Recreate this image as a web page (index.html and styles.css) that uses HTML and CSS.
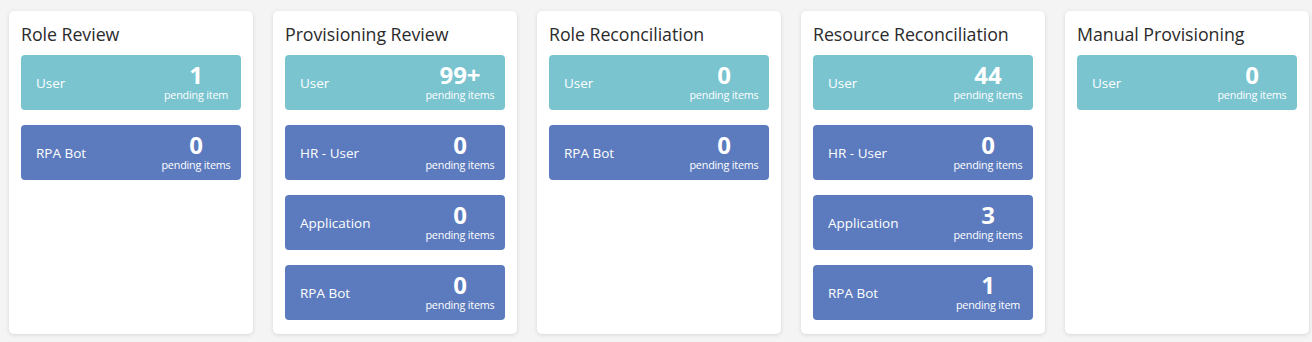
FILE: index.html
```html
<!DOCTYPE html>
<html lang="en">
<head>
<meta charset="utf-8">
<title>Pending Reviews</title>
<link rel="stylesheet" href="styles.css">
</head>
<body>
<div class="board">
  <section class="card">
    <h2 class="card-title">Role Review</h2>
    <div class="tile tile-user"><span class="tile-label">User</span><span class="tile-count"><span class="num">1</span><span class="sub">pending item</span></span></div>
    <div class="tile tile-other"><span class="tile-label">RPA Bot</span><span class="tile-count"><span class="num">0</span><span class="sub">pending items</span></span></div>
  </section>
  <section class="card">
    <h2 class="card-title">Provisioning Review</h2>
    <div class="tile tile-user"><span class="tile-label">User</span><span class="tile-count"><span class="num">99+</span><span class="sub">pending items</span></span></div>
    <div class="tile tile-other"><span class="tile-label">HR - User</span><span class="tile-count"><span class="num">0</span><span class="sub">pending items</span></span></div>
    <div class="tile tile-other"><span class="tile-label">Application</span><span class="tile-count"><span class="num">0</span><span class="sub">pending items</span></span></div>
    <div class="tile tile-other"><span class="tile-label">RPA Bot</span><span class="tile-count"><span class="num">0</span><span class="sub">pending items</span></span></div>
  </section>
  <section class="card">
    <h2 class="card-title">Role Reconciliation</h2>
    <div class="tile tile-user"><span class="tile-label">User</span><span class="tile-count"><span class="num">0</span><span class="sub">pending items</span></span></div>
    <div class="tile tile-other"><span class="tile-label">RPA Bot</span><span class="tile-count"><span class="num">0</span><span class="sub">pending items</span></span></div>
  </section>
  <section class="card">
    <h2 class="card-title">Resource Reconciliation</h2>
    <div class="tile tile-user"><span class="tile-label">User</span><span class="tile-count"><span class="num">44</span><span class="sub">pending items</span></span></div>
    <div class="tile tile-other"><span class="tile-label">HR - User</span><span class="tile-count"><span class="num">0</span><span class="sub">pending items</span></span></div>
    <div class="tile tile-other"><span class="tile-label">Application</span><span class="tile-count"><span class="num">3</span><span class="sub">pending items</span></span></div>
    <div class="tile tile-other"><span class="tile-label">RPA Bot</span><span class="tile-count"><span class="num">1</span><span class="sub">pending item</span></span></div>
  </section>
  <section class="card">
    <h2 class="card-title">Manual Provisioning</h2>
    <div class="tile tile-user"><span class="tile-label">User</span><span class="tile-count"><span class="num">0</span><span class="sub">pending items</span></span></div>
  </section>
</div>
</body>
</html>
```
FILE: styles.css
```css
html, body {
  margin: 0;
  padding: 0;
  background: #f4f4f4;
}
body {
  font-family: "Open Sans", "Noto Sans", sans-serif;
  color: #333;
}
.board {
  display: flex;
  gap: 20px;
  padding: 11px 3px 7px 9px;
  align-items: stretch;
}
.card {
  width: 244px;
  height: 323px;
  box-sizing: border-box;
  background: #fff;
  border-radius: 5px;
  box-shadow: 0 1px 4px rgba(0, 0, 0, 0.12);
  padding: 11px 12px 14px 12px;
  display: flex;
  flex-direction: column;
  gap: 15px;
}
.card-title {
  margin: 0 0 -6px 0;
  font-size: 17.8px;
  font-weight: 400;
  line-height: 24px;
  color: #2b2b2b;
  letter-spacing: -0.05px;
}
.tile {
  height: 55px;
  border-radius: 4px;
  display: flex;
  align-items: center;
  justify-content: space-between;
  padding: 0 8px 0 15px;
  color: #fff;
  flex-shrink: 0;
}
.tile-user { background: #79c4cf; }
.tile-other { background: #5c7bbe; }
.tile-label {
  font-size: 13.5px;
  padding-top: 1px;
}
.tile-count {
  width: 74px;
  display: flex;
  flex-direction: column;
  align-items: center;
  padding-bottom: 3px;
}
.num {
  font-size: 24px;
  font-weight: 700;
  line-height: 26px;
}
.sub {
  font-size: 10.8px;
  line-height: 13px;
  letter-spacing: -0.2px;
}
```
